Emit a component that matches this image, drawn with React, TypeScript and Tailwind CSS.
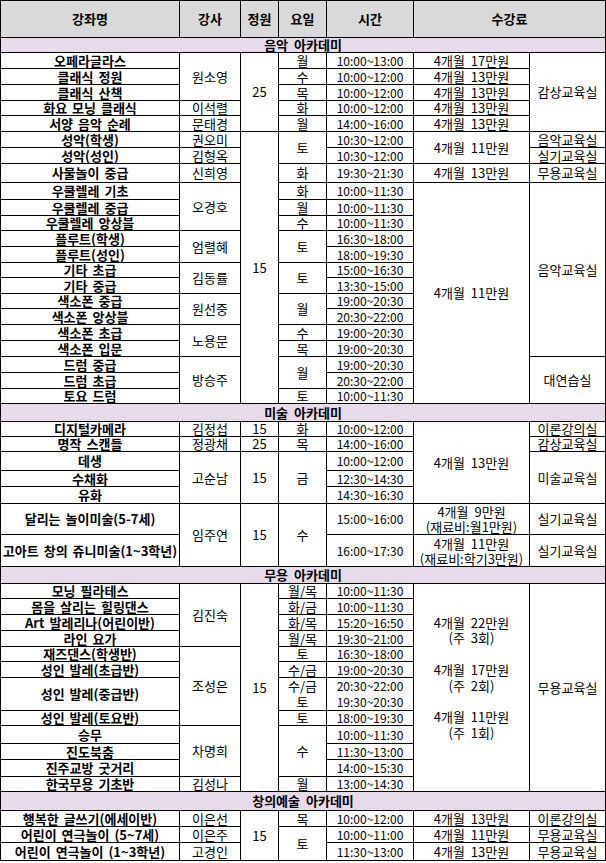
import React from "react";

const cell =
  "border border-black p-0 text-center align-middle leading-[14px] whitespace-nowrap";

// 한글 칸: 원본 비트맵 글꼴이 조금 넓어서 13px + 넓은 띄어쓰기
const Td = ({
  r,
  children,
}: {
  r?: number;
  children?: React.ReactNode;
}) => (
  <td rowSpan={r} className={`${cell} text-[13px] [word-spacing:3px]`}>
    {children}
  </td>
);

// 시간 칸
const T = ({ children }: { children: React.ReactNode }) => (
  <td className={`${cell} text-[12px]`}>{children}</td>
);

const B = ({ children }: { children: React.ReactNode }) => (
  <td className={`${cell} text-[13px] font-bold [word-spacing:2px]`}>
    {children}
  </td>
);

const Section = ({ title, h }: { title: string; h: string }) => (
  <tr className={h}>
    <td
      colSpan={7}
      className={`${cell} bg-[#e7dbeb] text-[13px] font-bold [word-spacing:3px]`}
    >
      {title}
    </td>
  </tr>
);

const App = () => {
  return (
    <div className="bg-white w-[606px] h-[863px]">
      <table className="table-fixed border-collapse w-[605px] font-['Noto_Sans_CJK_KR',sans-serif] text-black">
        <colgroup>
          <col className="w-[179px]" />
          <col className="w-[61px]" />
          <col className="w-[38px]" />
          <col className="w-[48px]" />
          <col className="w-[87px]" />
          <col className="w-[116px]" />
          <col className="w-[76px]" />
        </colgroup>
        <tbody>
          <tr className="h-[37px] bg-[#d9d9d9]">
            <B>강좌명</B>
            <B>강사</B>
            <B>정원</B>
            <B>요일</B>
            <B>시간</B>
            <td colSpan={2} className={`${cell} text-[13px] font-bold`}>
              수강료
            </td>
          </tr>

          {/* 음악 */}
          <Section title="음악 아카데미" h="h-[15px]" />
          <tr className="h-[16px]">
            <B>오페라글라스</B>
            <Td r={3}>원소영</Td>
            <Td r={5}>25</Td>
            <Td>월</Td>
            <T>10:00~13:00</T>
            <Td>4개월 17만원</Td>
            <Td r={5}>감상교육실</Td>
          </tr>
          <tr className="h-[16px]">
            <B>클래식 정원</B>
            <Td>수</Td>
            <T>10:00~12:00</T>
            <Td>4개월 13만원</Td>
          </tr>
          <tr className="h-[16px]">
            <B>클래식 산책</B>
            <Td>목</Td>
            <T>10:00~12:00</T>
            <Td>4개월 13만원</Td>
          </tr>
          <tr className="h-[15px]">
            <B>화요 모닝 클래식</B>
            <Td>이석렬</Td>
            <Td>화</Td>
            <T>10:00~12:00</T>
            <Td>4개월 13만원</Td>
          </tr>
          <tr className="h-[16px]">
            <B>서양 음악 순례</B>
            <Td>문태경</Td>
            <Td>월</Td>
            <T>14:00~16:00</T>
            <Td>4개월 13만원</Td>
          </tr>
          <tr className="h-[16px]">
            <B>성악(학생)</B>
            <Td>권오미</Td>
            <Td r={17}>15</Td>
            <Td r={2}>토</Td>
            <T>10:30~12:00</T>
            <Td r={2}>4개월 11만원</Td>
            <Td>음악교육실</Td>
          </tr>
          <tr className="h-[16px]">
            <B>성악(성인)</B>
            <Td>김형옥</Td>
            <T>10:30~12:00</T>
            <Td>실기교육실</Td>
          </tr>
          <tr className="h-[19px]">
            <B>사물놀이 중급</B>
            <Td>신희영</Td>
            <Td>화</Td>
            <T>19:30~21:30</T>
            <Td>4개월 13만원</Td>
            <Td>무용교육실</Td>
          </tr>
          <tr className="h-[17px]">
            <B>우쿨렐레 기초</B>
            <Td r={3}>오경호</Td>
            <Td>화</Td>
            <T>10:00~11:30</T>
            <Td r={14}>4개월 11만원</Td>
            <Td r={11}>음악교육실</Td>
          </tr>
          <tr className="h-[16px]">
            <B>우쿨렐레 중급</B>
            <Td>월</Td>
            <T>10:00~11:30</T>
          </tr>
          <tr className="h-[15px]">
            <B>우쿨렐레 앙상블</B>
            <Td>수</Td>
            <T>10:00~11:30</T>
          </tr>
          <tr className="h-[16px]">
            <B>플루트(학생)</B>
            <Td r={2}>엄렬혜</Td>
            <Td r={2}>토</Td>
            <T>16:30~18:00</T>
          </tr>
          <tr className="h-[16px]">
            <B>플루트(성인)</B>
            <T>18:00~19:30</T>
          </tr>
          <tr className="h-[15px]">
            <B>기타 초급</B>
            <Td r={2}>김동률</Td>
            <Td r={2}>토</Td>
            <T>15:00~16:30</T>
          </tr>
          <tr className="h-[16px]">
            <B>기타 중급</B>
            <T>13:30~15:00</T>
          </tr>
          <tr className="h-[15px]">
            <B>색소폰 중급</B>
            <Td r={2}>원선중</Td>
            <Td r={2}>월</Td>
            <T>19:00~20:30</T>
          </tr>
          <tr className="h-[16px]">
            <B>색소폰 앙상블</B>
            <T>20:30~22:00</T>
          </tr>
          <tr className="h-[16px]">
            <B>색소폰 초급</B>
            <Td r={2}>노용문</Td>
            <Td>수</Td>
            <T>19:00~20:30</T>
          </tr>
          <tr className="h-[16px]">
            <B>색소폰 입문</B>
            <Td>목</Td>
            <T>19:00~20:30</T>
          </tr>
          <tr className="h-[16px]">
            <B>드럼 중급</B>
            <Td r={3}>방승주</Td>
            <Td r={2}>월</Td>
            <T>19:00~20:30</T>
            <Td r={3}>대연습실</Td>
          </tr>
          <tr className="h-[16px]">
            <B>드럼 초급</B>
            <T>20:30~22:00</T>
          </tr>
          <tr className="h-[15px]">
            <B>토요 드럼</B>
            <Td>토</Td>
            <T>10:00~11:30</T>
          </tr>

          {/* 미술 */}
          <Section title="미술 아카데미" h="h-[18px]" />
          <tr className="h-[15px]">
            <B>디지털카메라</B>
            <Td>김정섭</Td>
            <Td>15</Td>
            <Td>화</Td>
            <T>10:00~12:00</T>
            <Td r={5}>4개월 13만원</Td>
            <Td>이론강의실</Td>
          </tr>
          <tr className="h-[15px]">
            <B>명작 스캔들</B>
            <Td>정광채</Td>
            <Td>25</Td>
            <Td>목</Td>
            <T>14:00~16:00</T>
            <Td>감상교육실</Td>
          </tr>
          <tr className="h-[19px]">
            <B>데생</B>
            <Td r={3}>고순남</Td>
            <Td r={3}>15</Td>
            <Td r={3}>금</Td>
            <T>10:00~12:00</T>
            <Td r={3}>미술교육실</Td>
          </tr>
          <tr className="h-[16px]">
            <B>수채화</B>
            <T>12:30~14:30</T>
          </tr>
          <tr className="h-[17px]">
            <B>유화</B>
            <T>14:30~16:30</T>
          </tr>
          <tr className="h-[30px]">
            <B>달리는 놀이미술(5-7세)</B>
            <Td r={2}>임주연</Td>
            <Td r={2}>15</Td>
            <Td r={2}>수</Td>
            <T>15:00~16:00</T>
            <Td>
              <div className="leading-[15px]">
                4개월 9만원
                <br />
                (재료비:월1만원)
              </div>
            </Td>
            <Td>실기교육실</Td>
          </tr>
          <tr className="h-[32px]">
            <B>고아트 창의 쥬니미술(1~3학년)</B>
            <T>16:00~17:30</T>
            <Td>
              <div className="leading-[15px]">
                4개월 11만원
                <br />
                (재료비:학기3만원)
              </div>
            </Td>
            <Td>실기교육실</Td>
          </tr>

          {/* 무용 */}
          <Section title="무용 아카데미" h="h-[17px]" />
          <tr className="h-[15px]">
            <B>모닝 필라테스</B>
            <Td r={4}>김진숙</Td>
            <Td r={12}>15</Td>
            <Td>월/목</Td>
            <T>10:00~11:30</T>
            <Td r={12}>
              <div className="leading-[15.7px] pb-[20px]">
                4개월 22만원
                <br />
                (주 3회)
                <br />
                <br />
                4개월 17만원
                <br />
                (주 2회)
                <br />
                <br />
                4개월 11만원
                <br />
                (주 1회)
              </div>
            </Td>
            <Td r={12}>무용교육실</Td>
          </tr>
          <tr className="h-[16px]">
            <B>몸을 살리는 힐링댄스</B>
            <Td>화/금</Td>
            <T>10:00~11:30</T>
          </tr>
          <tr className="h-[16px]">
            <B>Art 발레리나(어린이반)</B>
            <Td>화/목</Td>
            <T>15:20~16:50</T>
          </tr>
          <tr className="h-[16px]">
            <B>라인 요가</B>
            <Td>월/목</Td>
            <T>19:30~21:00</T>
          </tr>
          <tr className="h-[15px]">
            <B>재즈댄스(학생반)</B>
            <Td r={4}>조성은</Td>
            <Td>토</Td>
            <T>16:30~18:00</T>
          </tr>
          <tr className="h-[16px]">
            <B>성인 발레(초급반)</B>
            <Td>수/금</Td>
            <T>19:00~20:30</T>
          </tr>
          <tr className="h-[33px]">
            <B>성인 발레(중급반)</B>
            <Td>
              <div className="leading-[16px]">
                수/금
                <br />토
              </div>
            </Td>
            <T>
              <div className="leading-[16px]">
                20:30~22:00
                <br />
                19:30~20:30
              </div>
            </T>
          </tr>
          <tr className="h-[15px]">
            <B>성인 발레(토요반)</B>
            <Td>토</Td>
            <T>18:00~19:30</T>
          </tr>
          <tr className="h-[18px]">
            <B>승무</B>
            <Td r={3}>차명희</Td>
            <Td r={3}>수</Td>
            <T>10:00~11:30</T>
          </tr>
          <tr className="h-[16px]">
            <B>진도북춤</B>
            <T>11:30~13:00</T>
          </tr>
          <tr className="h-[17px]">
            <B>진주교방 굿거리</B>
            <T>14:00~15:30</T>
          </tr>
          <tr className="h-[15px]">
            <B>한국무용 기초반</B>
            <Td>김성나</Td>
            <Td>월</Td>
            <T>13:00~14:30</T>
          </tr>

          {/* 창의예술 */}
          <Section title="창의예술 아카데미" h="h-[19px]" />
          <tr className="h-[16px]">
            <B>행복한 글쓰기(에세이반)</B>
            <Td>이은선</Td>
            <Td r={3}>15</Td>
            <Td>목</Td>
            <T>10:00~12:00</T>
            <Td>4개월 13만원</Td>
            <Td>이론강의실</Td>
          </tr>
          <tr className="h-[16px]">
            <B>어린이 연극놀이 (5~7세)</B>
            <Td>이은주</Td>
            <Td r={2}>토</Td>
            <T>10:00~11:00</T>
            <Td>4개월 11만원</Td>
            <Td>무용교육실</Td>
          </tr>
          <tr className="h-[18px]">
            <B>어린이 연극놀이 (1~3학년)</B>
            <Td>고경인</Td>
            <T>11:30~13:00</T>
            <Td>4개월 13만원</Td>
            <Td>무용교육실</Td>
          </tr>
        </tbody>
      </table>
    </div>
  );
};

export default App;
